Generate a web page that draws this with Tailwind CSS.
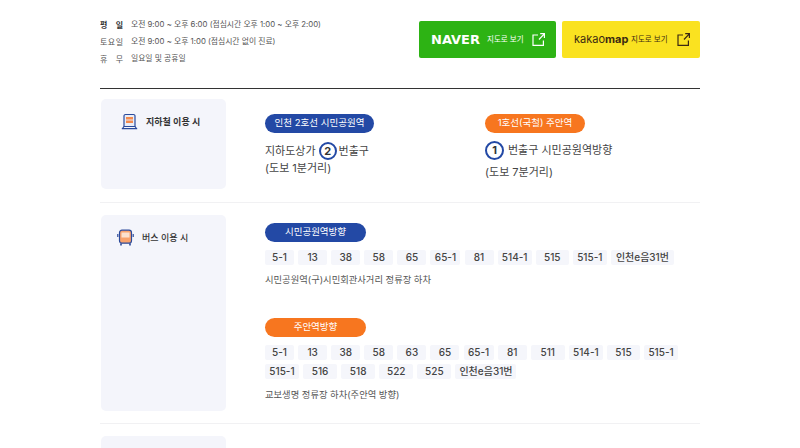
<!DOCTYPE html>
<html lang="ko">
<head>
  <meta charset="UTF-8">
  <title>진료시간 및 오시는 길</title>
  <script src="https://cdn.jsdelivr.net/npm/@tailwindcss/browser@4"></script>
</head>
<body class="bg-white font-['Inter','Noto_Sans_CJK_KR',sans-serif] text-[#333] overflow-hidden">
  <div class="w-[600px] h-[448px] mx-auto overflow-hidden">
    <!-- Hours + map buttons -->
    <div class="flex justify-between h-[89px] border-b border-[#333] pt-[16px]">
      <div class="text-[7.8px] text-[#555]">
        <div class="flex items-center h-[17px]"><span class="w-[23px] mr-[8px] flex justify-between font-bold text-[#333] text-[8px]"><span>평</span><span>일</span></span><span>오전 9:00 ~ 오후 6:00 (점심시간 오후 1:00 ~ 오후 2:00)</span></div>
        <div class="flex items-center h-[17px]"><span class="w-[23px] mr-[8px] flex justify-between text-[8px]"><span>토</span><span>요</span><span>일</span></span><span>오전 9:00 ~ 오후 1:00 (점심시간 없이 진료)</span></div>
        <div class="flex items-center h-[17px]"><span class="w-[23px] mr-[8px] flex justify-between text-[8px]"><span>휴</span><span>무</span></span><span>일요일 및 공휴일</span></div>
      </div>
      <div class="flex gap-[6px] mt-[5px] h-[37px]">
        <a class="w-[137px] rounded-[2px] bg-[#2db314] text-white flex items-center pl-[12px]">
          <span class="font-bold text-[13px] w-[56px] font-['DejaVu_Sans',sans-serif]">NAVER</span>
          <span class="text-[7.5px] w-[45px]">지도로 보기</span>
          <svg class="w-[13px] h-[13px]" viewBox="0 0 13 13" fill="none" stroke="currentColor" stroke-width="1.2"><path d="M6 2H1v10.4h10.4V7.5M7 6.5 12.3.8M8.2.7h4.2v4.2"/></svg>
        </a>
        <a class="w-[138px] rounded-[2px] bg-[#fae220] text-[#3c2a12] flex items-center pl-[12px]">
          <span class="text-[11px] w-[57px]">kakao<span class="font-bold">map</span></span>
          <span class="text-[7.5px] w-[46px]">지도로 보기</span>
          <svg class="w-[13px] h-[13px]" viewBox="0 0 13 13" fill="none" stroke="currentColor" stroke-width="1.2"><path d="M6 2H1v10.4h10.4V7.5M7 6.5 12.3.8M8.2.7h4.2v4.2"/></svg>
        </a>
      </div>
    </div>

    <!-- Subway -->
    <div class="flex border-b border-[#f1f1f3] pt-[10px] pb-[13px]">
      <div class="w-[125px] h-[90px] ml-px rounded-[5px] bg-[#f4f5fb] flex items-start pl-[20px] pt-[14px] gap-[8px] shrink-0">
        <svg class="w-[17px] h-[17px]" viewBox="0 0 17 17" fill="none"><path d="M3 3a1.5 1.5 0 0 1 1.5-1.5h8A1.5 1.5 0 0 1 14 3v10.500H3z" fill="#e9edf8" stroke="#2b4a9b" stroke-width="1.2"/><rect x="5" y="4" width="7" height="2.500" fill="#f58a4b"/><rect x="5" y="7.500" width="7" height="2.500" fill="#f58a4b"/><path d="M.8 15.600h15.400M3 13.500l-1.500 2M14 13.500l1.500 2" stroke="#2b4a9b" stroke-width="1.2"/></svg>
        <span class="text-[9px] font-semibold leading-[17px]">지하철 이용 시</span>
      </div>
      <div class="flex pl-[39px] pt-[15px]">
        <div class="w-[220px]">
          <span class="flex w-[109px] h-[19px] rounded-full bg-[#2349a5] text-white text-[9.500px] items-center justify-center">인천 2호선 시민공원역</span>
          <div class="flex items-center mt-[8px] h-[20px] text-[11px] text-[#444]">지하도상가
            <span class="w-[18px] h-[18px] mr-[2px] ml-[3px] rounded-full border-2 border-[#2349a5] flex items-center justify-center text-[11px] font-bold text-[#333]">2</span>번출구</div>
          <div class="text-[11px] leading-[16px] -mt-[1px] text-[#444]">(도보 1분거리)</div>
        </div>
        <div>
          <span class="flex w-[100px] h-[19px] rounded-full bg-[#f7761f] text-white text-[9.500px] items-center justify-center">1호선(국철) 주안역</span>
          <div class="flex items-center mt-[7px] h-[20px] text-[11px] text-[#444]">
            <span class="w-[19px] h-[19px] mr-[4px] rounded-full border-2 border-[#2349a5] flex items-center justify-center text-[11px] font-bold text-[#333]">1</span>번출구 시민공원역방향</div>
          <div class="text-[11px] leading-[16px] mt-[4px] text-[#444]">(도보 7분거리)</div>
        </div>
      </div>
    </div>

    <!-- Bus -->
    <div class="flex border-b border-[#f1f1f3] pt-[12px] pb-[12px]">
      <div class="w-[125px] h-[196px] ml-px rounded-[5px] bg-[#f4f5fb] flex items-start pl-[16px] pt-[14px] gap-[8px] shrink-0">
        <svg class="w-[17px] h-[17px]" viewBox="0 0 17 17" fill="none"><rect x="2.500" y="1.200" width="12" height="13" rx="2.500" fill="#f9a26c" stroke="#2b4a9b" stroke-width="1.2"/><rect x="4.500" y="3.500" width="8" height="5" fill="#fbe1cf"/><path d="M.8 5v3M16.200 5v3" stroke="#2b4a9b" stroke-width="1.2"/><path d="M4 14.500v2M13 14.500v2" stroke="#2b4a9b" stroke-width="1.6"/></svg>
        <span class="text-[9px] font-medium leading-[17px]">버스 이용 시</span>
      </div>
      <div class="pl-[39px] pt-[8px]">
        <span class="flex w-[101px] h-[19px] rounded-full bg-[#2349a5] text-white text-[9.500px] items-center justify-center">시민공원역방향</span>
        <div class="flex gap-[4.100px] mt-[8px] text-[10px] font-medium text-[#444] text-center leading-[15px]">
          <span class="w-[29px] rounded-[2px] bg-[#f5f6fb]">5-1</span>
          <span class="w-[29px] rounded-[2px] bg-[#f5f6fb]">13</span>
          <span class="w-[29px] rounded-[2px] bg-[#f5f6fb]">38</span>
          <span class="w-[29px] rounded-[2px] bg-[#f5f6fb]">58</span>
          <span class="w-[29px] rounded-[2px] bg-[#f5f6fb]">65</span>
          <span class="w-[30px] rounded-[2px] bg-[#f5f6fb]">65-1</span>
          <span class="w-[29px] rounded-[2px] bg-[#f5f6fb]">81</span>
          <span class="w-[34px] rounded-[2px] bg-[#f5f6fb]">514-1</span>
          <span class="w-[33px] rounded-[2px] bg-[#f5f6fb]">515</span>
          <span class="w-[34px] rounded-[2px] bg-[#f5f6fb]">515-1</span>
          <span class="w-[63px] rounded-[2px] bg-[#f5f6fb]">인천e음31번</span>
        </div>
        <p class="text-[9.300px] text-[#555] mt-[8px] leading-[14px]">시민공원역(구)시민회관사거리 정류장 하차</p>
        <span class="flex w-[101px] h-[19px] mt-[31px] rounded-full bg-[#f7761f] text-white text-[9.500px] items-center justify-center">주안역방향</span>
        <div class="flex flex-wrap gap-x-[4.100px] gap-y-[4px] w-[430px] mt-[8px] text-[10px] font-medium text-[#444] text-center leading-[15px]">
          <span class="w-[29px] rounded-[2px] bg-[#f5f6fb]">5-1</span>
          <span class="w-[29px] rounded-[2px] bg-[#f5f6fb]">13</span>
          <span class="w-[29px] rounded-[2px] bg-[#f5f6fb]">38</span>
          <span class="w-[29px] rounded-[2px] bg-[#f5f6fb]">58</span>
          <span class="w-[29px] rounded-[2px] bg-[#f5f6fb]">63</span>
          <span class="w-[29px] rounded-[2px] bg-[#f5f6fb]">65</span>
          <span class="w-[30px] rounded-[2px] bg-[#f5f6fb]">65-1</span>
          <span class="w-[29px] rounded-[2px] bg-[#f5f6fb]">81</span>
          <span class="w-[34px] rounded-[2px] bg-[#f5f6fb]">511</span>
          <span class="w-[34px] rounded-[2px] bg-[#f5f6fb]">514-1</span>
          <span class="w-[33px] rounded-[2px] bg-[#f5f6fb]">515</span>
          <span class="w-[34px] rounded-[2px] bg-[#f5f6fb]">515-1</span>
          <span class="w-[34px] rounded-[2px] bg-[#f5f6fb]">515-1</span>
          <span class="w-[34px] rounded-[2px] bg-[#f5f6fb]">516</span>
          <span class="w-[34px] rounded-[2px] bg-[#f5f6fb]">518</span>
          <span class="w-[34px] rounded-[2px] bg-[#f5f6fb]">522</span>
          <span class="w-[34px] rounded-[2px] bg-[#f5f6fb]">525</span>
          <span class="w-[61px] rounded-[2px] bg-[#f5f6fb]">인천e음31번</span>
        </div>
        <p class="text-[9.300px] text-[#555] mt-[9px] leading-[14px]">교보생명 정류장 하차(주안역 방향)</p>
      </div>
    </div>

    <!-- Next section, cut off by the window -->
    <div class="pt-[12px]">
      <div class="w-[125px] h-[90px] ml-px rounded-[5px] bg-[#f4f5fb]"></div>
    </div>
  </div>
</body>
</html>
